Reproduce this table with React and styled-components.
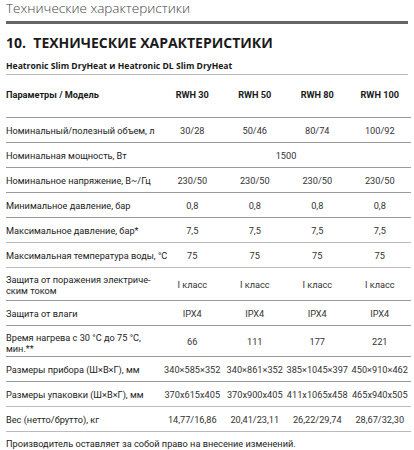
import styled, { createGlobalStyle } from 'styled-components'

const GlobalStyle = createGlobalStyle`
    html, body {
        margin: 0;
        padding: 0;
        background: #ffffff;
    }
`;

const Page = styled.div`
    width: 402px;
    padding: 0 6px;
    font-family: Roboto, "Liberation Sans", sans-serif;
    color: #222;
`;

const PageHeader = styled.div`
    font-family: "Open Sans", "Liberation Sans", sans-serif;
    font-weight: 300;
    font-size: 13.5px;
    line-height: 16px;
    color: #444;
    padding-bottom: 5px;
    border-bottom: 3px solid #666;
`;

const SectionTitle = styled.h1`
    margin: 10px 0 0;
    font-family: "Open Sans", "Liberation Sans", sans-serif;
    font-weight: 700;
    font-size: 14px;
    line-height: 18px;
    color: #1a1a1a;
    white-space: pre;
`;

const Subtitle = styled.h2`
    margin: 8px 0 0;
    padding-bottom: 2px;
    font-family: "Open Sans", "Liberation Sans", sans-serif;
    font-weight: 700;
    font-size: 8.6px;
    line-height: 12px;
    color: #1a1a1a;
    border-bottom: 1.5px solid #bbb;
`;

const Table = styled.table`
    width: 405px;
    border-collapse: collapse;
    table-layout: fixed;
    font-size: 9.2px;
`;

const HeadCell = styled.th`
    padding: 14px 0 17px;
    font-weight: 700;
    line-height: 11px;
    text-align: ${(p) => (p.$left ? 'left' : 'center')};
    color: #1a1a1a;
    border-bottom: 1px solid #999;
`;

const Row = styled.tr`
    height: ${(p) => (p.$pad ? 'auto' : '25px')};
    border-bottom: ${(p) => (p.$light ? '1.5px solid #bbb' : '1px solid #999')};
`;

const ParamCell = styled.td`
    padding: ${(p) => p.$pad || '0'};
    line-height: 11px;
    text-align: left;
    vertical-align: middle;
    color: #222;
    white-space: nowrap;
`;

const ValueCell = styled.td`
    padding: 0;
    line-height: 11px;
    text-align: center;
    vertical-align: middle;
    color: #333;
    white-space: nowrap;
`;

const Footer = styled.p`
    margin: 6px 0 0;
    font-size: 9.2px;
    line-height: 11px;
    color: #222;
`;

const rows = [
    { name: 'Номинальный/полезный объем, л', values: ['30/28', '50/46', '80/74', '100/92'] },
    { name: 'Номинальная мощность, Вт', span: '1500' },
    { name: 'Номинальное напряжение, В~/Гц', values: ['230/50', '230/50', '230/50', '230/50'] },
    { name: 'Минимальное давление, бар', values: ['0,8', '0,8', '0,8', '0,8'] },
    { name: 'Максимальное давление, бар*', values: ['7,5', '7,5', '7,5', '7,5'], light: true },
    { name: 'Максимальная температура воды, °С', values: ['75', '75', '75', '75'], light: true },
    { name: ['Защита от поражения электриче-', 'ским током'], values: ['I класс', 'I класс', 'I класс', 'I класс'], pad: '6px 0 4px' },
    { name: 'Защита от влаги', values: ['IPX4', 'IPX4', 'IPX4', 'IPX4'] },
    { name: ['Время нагрева с 30 °С до 75 °С,', 'мин.**'], values: ['66', '111', '177', '221'], pad: '6px 0 2px' },
    { name: 'Размеры прибора (Ш×В×Г), мм', values: ['340×585×352', '340×861×352', '385×1045×397', '450×910×462'] },
    { name: 'Размеры упаковки (Ш×В×Г), мм', values: ['370x615x405', '370x900x405', '411x1065x458', '465x940x505'], light: true },
    { name: 'Вес (нетто/брутто), кг', values: ['14,77/16,86', '20,41/23,11', '26,22/29,74', '28,67/32,30'], light: true },
];

const models = ['RWH 30', 'RWH 50', 'RWH 80', 'RWH 100'];

function App() {
    return (
        <Page>
            <GlobalStyle />
            <PageHeader>Технические характеристики</PageHeader>
            <SectionTitle>{'10.  ТЕХНИЧЕСКИЕ ХАРАКТЕРИСТИКИ'}</SectionTitle>
            <Subtitle>Heatronic Slim DryHeat и Heatronic DL Slim DryHeat</Subtitle>
            <Table>
                <colgroup>
                    <col style={{ width: '155px' }} />
                    <col />
                    <col />
                    <col />
                    <col />
                </colgroup>
                <thead>
                    <tr>
                        <HeadCell $left>Параметры / Модель</HeadCell>
                        {models.map((m) => (
                            <HeadCell key={m}>{m}</HeadCell>
                        ))}
                    </tr>
                </thead>
                <tbody>
                    {rows.map((r, i) => (
                        <Row key={i} $pad={r.pad} $light={r.light}>
                            <ParamCell $pad={r.pad}>
                                {Array.isArray(r.name) ? (
                                    <>
                                        {r.name[0]}
                                        <br />
                                        {r.name[1]}
                                    </>
                                ) : (
                                    r.name
                                )}
                            </ParamCell>
                            {r.span ? (
                                <ValueCell colSpan={4}>{r.span}</ValueCell>
                            ) : (
                                r.values.map((v, j) => <ValueCell key={j}>{v}</ValueCell>)
                            )}
                        </Row>
                    ))}
                </tbody>
            </Table>
            <Footer>Производитель оставляет за собой право на внесение изменений.</Footer>
        </Page>
    )
}

export default App
